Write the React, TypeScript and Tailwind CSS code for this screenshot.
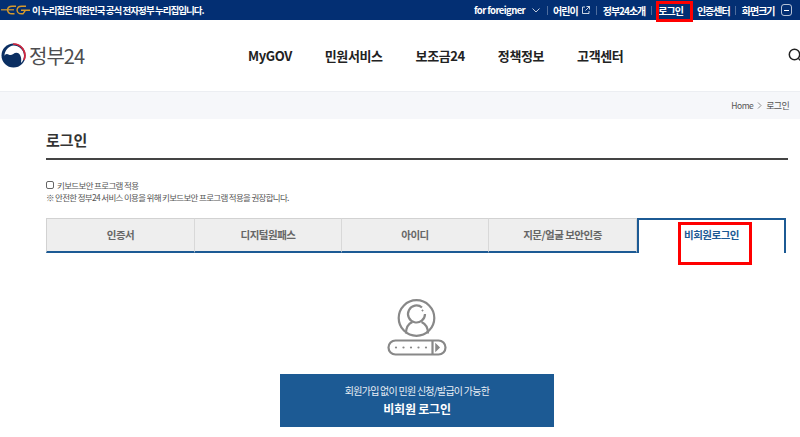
import React from 'react';

const fontStack = "font-['Noto_Sans_CJK_KR','Noto_Sans',sans-serif]";

const navItems = ['MyGOV', '민원서비스', '보조금24', '정책정보', '고객센터'];
const tabs = ['인증서', '디지털원패스', '아이디', '지문/얼굴 보안인증'];

const Divider: React.FC = () => <span className="h-[9px] w-px shrink-0 bg-white/30" />;

const App: React.FC = () => {
  return (
    <div className={`relative h-[437px] w-[800px] overflow-hidden bg-white ${fontStack}`}>
      {/* Top strip */}
      <div className="flex h-5 items-center overflow-hidden bg-[#032f73] font-bold text-white">
        <svg width="29" height="12" viewBox="0 0 29 12" fill="none" className="ml-[1px] shrink-0">
          <path d="M0 5.800h13" stroke="#d69a2d" strokeWidth="1.200" />
          <path d="M15 2.200H11Q7 2.200 6.500 5.800 7 9.800 11 9.800H13.500" stroke="#d69a2d" strokeWidth="1.400" />
          <path d="M25 2.200H20.500Q16.500 2.200 16 6 16.500 9.800 20.500 9.800H22L24.500 6.200H20M24 6.200h5" stroke="#d69a2d" strokeWidth="1.400" />
        </svg>
        <span className="ml-[2px] w-[442px] shrink-0 whitespace-nowrap text-[9.5px] tracking-[-0.95px]">이 누리집은 대한민국 공식 전자정부 누리집입니다.</span>
        <div className="flex shrink-0 items-center whitespace-nowrap text-[10px] tracking-[-1px]">
          <span className="text-[9.5px] tracking-[-0.6px]">for foreigner</span>
          <svg width="8" height="5" viewBox="0 0 8 5" fill="none" className="ml-[7px] mr-[7px] shrink-0">
            <path d="M.5.5 4 4 7.500.5" stroke="#fff" strokeOpacity=".75" />
          </svg>
          <Divider />
          <span className="ml-[5px]">어린이</span>
          <svg width="8" height="8" viewBox="0 0 8 8" fill="none" className="ml-[4px] mr-[6px] shrink-0">
            <path d="M3 1H.5v6.500H7V5M4.500.5h3v3M7.500.5 3.500 4.500" stroke="#fff" strokeWidth=".8" />
          </svg>
          <Divider />
          <span className="ml-[6px] mr-[6px]">정부24소개</span>
          <Divider />
          <span className="ml-[6px] mr-[8px]">로그인</span>
          <Divider />
          <span className="ml-[5px] mr-[5px]">인증센터</span>
          <Divider />
          <span className="ml-[6px]">화면크기</span>
          <span className="ml-[6px] flex h-[12px] w-[11px] shrink-0 items-center justify-center rounded-[3px] border border-white/70">
            <span className="h-px w-[5px] bg-white" />
          </span>
        </div>
      </div>

      {/* Header */}
      <div className="flex h-[72px] items-center border-b border-[#eceef2]">
        <svg width="25" height="25" viewBox="0 0 25 25" className="ml-[1px] shrink-0">
          <circle cx="12.500" cy="12.500" r="12" fill="#0b2f62" />
          <path d="M3.500 13C3.500 7 8 3 12.500 2.500 18 2.500 23 7 23 12.500 23 15.500 22 18 20 20 21 14 19 10 15.500 9.800 12.500 9.800 11 13 8 11.800 6 10.200 4 11 3.500 13Z" fill="#fff" />
          <path d="M12 1A11.500 11.500 0 0 1 23 17" fill="none" stroke="#d7263d" strokeWidth="1.700" />
        </svg>
        <span className="ml-[3px] w-[219px] shrink-0 text-[20px] font-normal tracking-[-1px] text-[#4d4d4f]">정부24</span>
        {navItems.map((item, i) => (
          <span
            key={item}
            className={`shrink-0 whitespace-nowrap text-[13px] font-bold tracking-[-0.4px] text-[#222] ${i === 0 ? 'ml-0' : 'ml-[33px]'}`}
          >
            {item}
          </span>
        ))}
        <svg width="16" height="16" viewBox="0 0 16 16" fill="none" className="ml-auto shrink-0 translate-x-[4px]">
          <circle cx="6.500" cy="6.500" r="5.200" stroke="#222" strokeWidth="1.500" />
          <path d="m10.500 10.500 4 4" stroke="#222" strokeWidth="1.500" />
        </svg>
      </div>

      {/* Breadcrumb */}
      <div className="flex h-[27px] items-center justify-end bg-[#f6f7fa] pr-[11px] text-[9px] tracking-[-0.7px] text-[#555]">
        <span className="text-[8.5px] tracking-[-0.5px]">Home</span>
        <svg width="5" height="7" viewBox="0 0 5 7" fill="none" className="mx-[4px]">
          <path d="m1 .5 3 3-3 3" stroke="#777" strokeWidth=".8" />
        </svg>
        <span>로그인</span>
      </div>

      {/* Content */}
      <div className="px-[46px] pt-[9px]">
        <h2 className="h-[30px] text-[15px] font-bold leading-[24px] text-[#333]">로그인</h2>
        <div className="h-[2px] w-[742px] bg-[#444]" />

        <div className="mt-[19px] flex h-[12px] items-center text-[8.5px] tracking-[-0.65px] text-[#555]">
          <span className="mr-[3px] h-[8px] w-[8px] rounded-[2px] border border-[#666] bg-white" />
          키보드보안 프로그램 적용
        </div>
        <p className="h-[13px] text-[8.5px] leading-[13px] tracking-[-0.68px] text-[#555]">
          ※ 안전한 정부24 서비스 이용을 위해 키보드보안 프로그램 적용을 권장합니다.
        </p>

        {/* Tabs */}
        <div className="mt-[14px] flex h-[35px] w-[740px]">
          {tabs.map((tab, i) => (
            <div
              key={tab}
              className={`flex items-center justify-center border-b-2 border-t border-b-[#1c5a94] border-t-[#d2d2d2] border-r border-r-[#d8d8d8] bg-[#eeeeee] text-[10.500px] font-bold tracking-[-0.5px] text-[#666] ${i === 0 ? 'w-[149px] border-l border-l-[#d2d2d2]' : i === 3 ? 'w-[148px]' : 'w-[147px]'}`}
            >
              {tab}
            </div>
          ))}
          <div className="flex h-[35px] w-[149px] items-center justify-center border-2 border-b-0 border-[#1c5a94] bg-white pb-[3px] text-[10.500px] font-bold tracking-[-0.5px] text-[#1c5a94]">
            비회원로그인
          </div>
        </div>

        {/* Non-member login */}
        <div className="flex flex-col items-center pl-[34px]">
          <svg width="60" height="57" viewBox="0 0 60 57" fill="none" className="mt-[46px]" stroke="#888" strokeWidth="2.200">
            <circle cx="29.500" cy="19" r="17.800" />
            <path d="M35 8.500A8.500 8.500 0 1 0 38 15" />
            <circle cx="35.500" cy="11.500" r=".6" fill="#888" strokeWidth="1" />
            <path d="M19 34.500C19 28 21 24.800 25.500 23M41 34.500C41 28 38.500 24.800 34.500 23" />
            <rect x="1.500" y="41.500" width="57" height="14" rx="7" />
            <path d="M45.500 41.500v14" />
            <path d="M49 45.500 52 48.500 49 51.500Z" fill="#888" strokeWidth="1.500" />
            {[9, 16.500, 24, 31.500, 39].map(cx => (
              <circle key={cx} cx={cx} cy="48.500" r="1.100" fill="#888" stroke="none" />
            ))}
          </svg>
          <div className="mt-[18px] flex h-[53px] w-[274px] flex-col items-center justify-center bg-[#1c5a94] text-white">
            <span className="text-[10px] leading-[15px] tracking-[-0.75px] text-[#e8eef5]">회원가입 없이 민원 신청/발급이 가능한</span>
            <span className="mt-[2px] text-[12px] font-bold leading-[18px] tracking-[-0.2px]">비회원 로그인</span>
          </div>
        </div>
      </div>

      {/* Annotation boxes */}
      <div className="absolute left-[656px] top-[1px] h-[21px] w-[37px] border-[3px] border-[#f00]" />
      <div className="absolute left-[678px] top-[222px] h-[43px] w-[74px] border-[3px] border-[#f00]" />
    </div>
  );
};

export default App;
